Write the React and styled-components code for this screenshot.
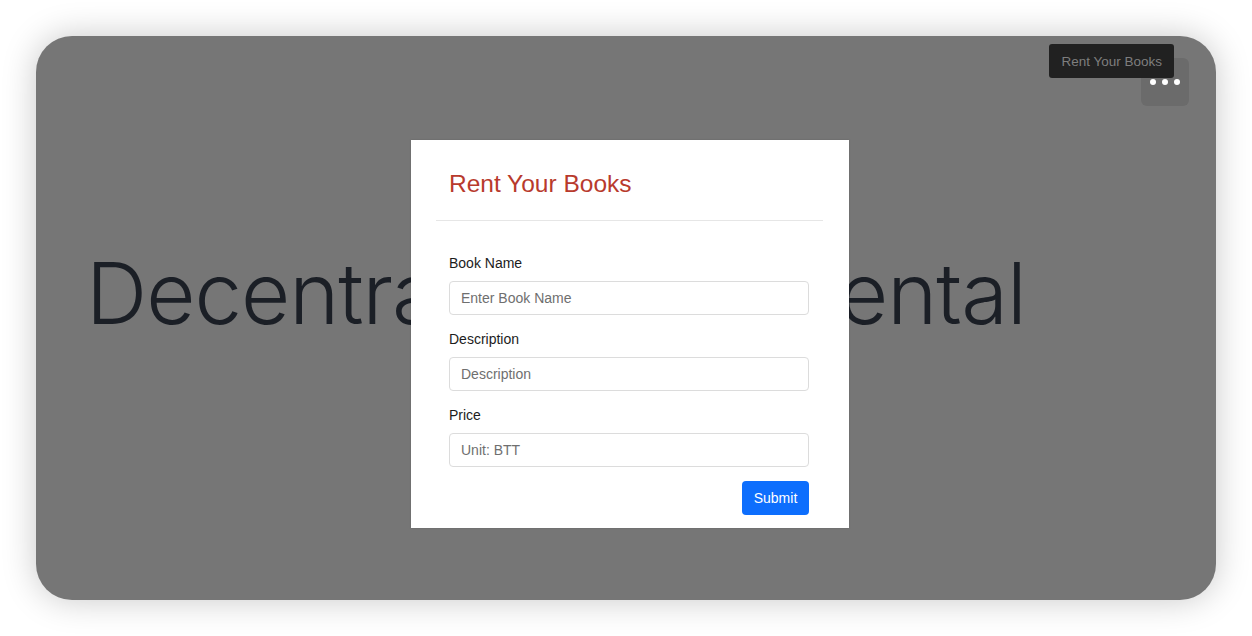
import React from "react";
import styled, { createGlobalStyle } from "styled-components";

const Global = createGlobalStyle`
  html, body { margin: 0; padding: 0; background: #ffffff; }
  body { font-family: "Liberation Sans", Arial, sans-serif; }
  * { box-sizing: border-box; }
`;

const Page = styled.div`
  width: 1252px;
  height: 636px;
  padding: 36px;
  background: #ffffff;
`;

const Frame = styled.div`
  position: relative;
  width: 1180px;
  height: 564px;
  border-radius: 36px;
  background: #767676;
  box-shadow: 0 0 34px rgba(0, 0, 0, 0.22);
  overflow: hidden;
`;

const Hero = styled.div`
  display: flex;
  padding: 207px 0 0 50px;
`;

const HeroTitle = styled.h1`
  margin: 0;
  font-family: Inter, "Liberation Sans", sans-serif;
  font-weight: 300;
  font-size: 85px;
  line-height: 1.2;
  letter-spacing: -1px;
  color: #1b1f26;
  white-space: nowrap;
`;

const Tight = styled.span`
  letter-spacing: -7.2px;
`;

const Tooltip = styled.div`
  position: absolute;
  top: 8px;
  right: 42px;
  z-index: 2;
  height: 34px;
  padding: 0 12px;
  display: flex;
  align-items: center;
  border-radius: 3px;
  background: #212121;
  color: #7e7e7e;
  font-size: 13.5px;
  font-family: "Liberation Sans", Arial, sans-serif;
`;

const MoreButton = styled.button`
  position: absolute;
  top: 22px;
  right: 27px;
  width: 48px;
  height: 48px;
  border: none;
  border-radius: 6px;
  background: #6b6b6b;
  display: flex;
  align-items: center;
  justify-content: center;
  gap: 6px;
  padding: 0;
`;

const Dot = styled.span`
  width: 6px;
  height: 6px;
  border-radius: 50%;
  background: #ffffff;
`;

const Modal = styled.div`
  position: absolute;
  top: 104px;
  left: 375px;
  width: 438px;
  height: 388px;
  background: #ffffff;
  display: flex;
  flex-direction: column;
  box-shadow: 0 0 2px rgba(0, 0, 0, 0.15);
`;

const ModalHeader = styled.div`
  margin: 0 26px 0 25px;
  padding: 29px 0 22px 13px;
  border-bottom: 1px solid #e6e6e6;
`;

const ModalTitle = styled.h2`
  margin: 0;
  font-family: "Liberation Sans", Arial, sans-serif;
  font-weight: 400;
  font-size: 24.5px;
  line-height: 29px;
  color: #b83a2d;
`;

const Form = styled.form`
  display: flex;
  flex-direction: column;
  gap: 16px;
  padding: 34px 40px 0 38px;
`;

const Field = styled.div`
  display: flex;
  flex-direction: column;
  gap: 10px;
`;

const Label = styled.label`
  font-size: 14px;
  line-height: 16px;
  color: #1c1c1c;
  font-weight: 400;
`;

const Input = styled.input`
  height: 34px;
  width: 100%;
  padding: 0 11px;
  border: 1px solid #dcdcdc;
  border-radius: 4px;
  font-family: "Liberation Sans", Arial, sans-serif;
  font-size: 14px;
  color: #333;
  outline: none;
  &::placeholder { color: #6f6f6f; }
`;

const Actions = styled.div`
  display: flex;
  justify-content: flex-end;
  margin-top: -2px;
`;

const SubmitButton = styled.button`
  width: 67px;
  height: 34px;
  border: none;
  border-radius: 4px;
  background: #0d6efd;
  color: #ffffff;
  font-family: "Liberation Sans", Arial, sans-serif;
  font-size: 14px;
  padding: 0;
`;

export default function App() {
  return (
    <>
      <Global />
      <Page>
        <Frame>
          <Hero>
            <HeroTitle>
              Decentra<Tight>lized Book R</Tight>ental
            </HeroTitle>
          </Hero>
          <MoreButton aria-label="More">
            <Dot />
            <Dot />
            <Dot />
          </MoreButton>
          <Tooltip>Rent Your Books</Tooltip>
          <Modal>
            <ModalHeader>
              <ModalTitle>Rent Your Books</ModalTitle>
            </ModalHeader>
            <Form onSubmit={(e) => e.preventDefault()}>
              <Field>
                <Label>Book Name</Label>
                <Input placeholder="Enter Book Name" />
              </Field>
              <Field>
                <Label>Description</Label>
                <Input placeholder="Description" />
              </Field>
              <Field>
                <Label>Price</Label>
                <Input placeholder="Unit: BTT" />
              </Field>
              <Actions>
                <SubmitButton type="submit">Submit</SubmitButton>
              </Actions>
            </Form>
          </Modal>
        </Frame>
      </Page>
    </>
  );
}
